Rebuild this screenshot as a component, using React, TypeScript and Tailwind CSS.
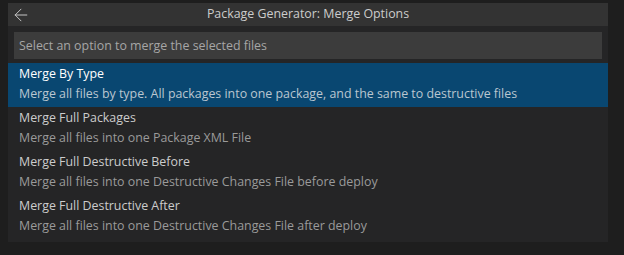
import { ArrowLeft } from "lucide-react";

const ITEMS = [
  {
    label: "Merge By Type",
    description:
      "Merge all files by type. All packages into one package, and the same to destructive files",
  },
  { label: "Merge Full Packages", description: "Merge all files into one Package XML File" },
  {
    label: "Merge Full Destructive Before",
    description: "Merge all files into one Destructive Changes File before deploy",
  },
  {
    label: "Merge Full Destructive After",
    description: "Merge all files into one Destructive Changes File after deploy",
  },
];

export default function App() {
  return (
    <div
      className="w-[624px] h-[255px] bg-[#1e1e1e] flex pt-[3px] pl-[8px] text-[12.4px]"
      style={{ fontFamily: '"Segoe UI", "Open Sans", sans-serif' }}
    >
      <div className="w-[600px] h-[239px] bg-[#252526] flex flex-col">
        <div className="h-[23px] bg-[#333333] flex items-center relative">
          <ArrowLeft className="absolute left-[3px] w-[20px] h-[20px] text-[#c5c5c5]" strokeWidth={1.2} />
          <div className="flex-1 text-center text-[#cccccc]">Package Generator: Merge Options</div>
        </div>
        <div className="px-[6px] pt-[6px] pb-[4px]">
          <div className="h-[27px] bg-[#3c3c3c] flex items-center px-[5px] pt-[1px] text-[#a6a6a6]">
            Select an option to merge the selected files
          </div>
        </div>
        <div className="flex flex-col">
          {ITEMS.map((item, i) => (
            <div
              key={i}
              className={`h-[44px] px-[11px] flex flex-col ${i === 0 ? "bg-[#094771]" : ""}`}
            >
              <div className={`h-[22px] pt-[1px] flex items-center ${i === 0 ? "text-white" : "text-[#cccccc]"}`}>
                {item.label}
              </div>
              <div className={`h-[18px] pt-[1px] flex items-center ${i === 0 ? "text-[#bac6d0]" : "text-[#9a9a9a]"}`}>
                {item.description}
              </div>
            </div>
          ))}
        </div>
      </div>
    </div>
  );
}
